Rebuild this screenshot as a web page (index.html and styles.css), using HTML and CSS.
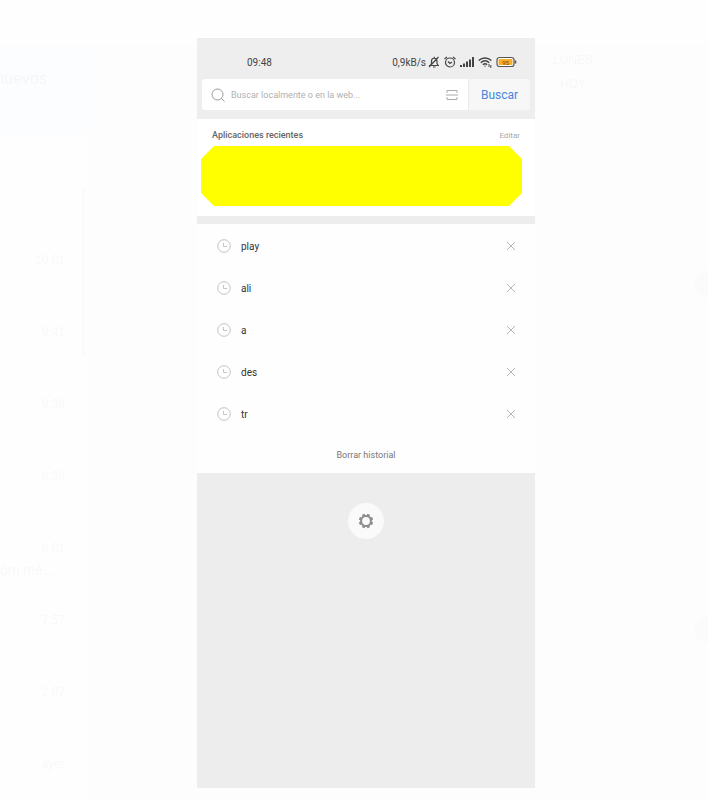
FILE: index.html
```html
<!DOCTYPE html>
<html lang="es">
<head>
    <meta charset="UTF-8">
    <meta name="viewport" content="width=device-width, initial-scale=1.0">
    <title>Buscar</title>
    <link rel="stylesheet" href="styles.css">
</head>
<body>

    <!-- Chat atenuado detrás del visor -->
    <div class="backdrop" aria-hidden="true">
        <div class="sidebar">
            <div class="notice">nuevos</div>
            <div class="filter"></div>
            <div class="chat"><span>10:01</span></div>
            <div class="chat"><span>9:41</span></div>
            <div class="chat"><span>9:38</span></div>
            <div class="chat"><span>8:30</span></div>
            <div class="chat"><span>8:01</span><p>om mé…</p></div>
            <div class="chat"><span>7:57</span></div>
            <div class="chat"><span>2:07</span></div>
            <div class="chat"><span>ayer</span></div>
            <div class="scrollbar"></div>
        </div>
        <div class="conversation">
            <div class="days">
                <span>LUNES</span>
                <span>HOY</span>
            </div>
            <div class="forward first"></div>
            <div class="forward second"></div>
        </div>
    </div>

    <main class="viewer">
        <div class="phone">
            <header class="top">
                <div class="status">
                    <span>09:48</span>
                    <div class="status-icons">
                        <span>0,9kB/s</span>
                        <svg class="bell" width="12" height="12" viewBox="0 0 24 24" fill="none" stroke="#444" stroke-width="2.4">
                            <path d="M2 19h20M5 18l2-3V10c0-3.500 2.500-5.500 5.500-5.500S18 6.500 18 10v5l2 3M12.500 4V1.500M10 22h5M2 22L21 2"/>
                        </svg>
                        <svg class="alarm" width="12" height="12" viewBox="0 0 24 24" fill="none" stroke="#444" stroke-width="2.400">
                            <circle cx="12" cy="13" r="9"/>
                            <path d="M1 6l5-4M23 6l-5-4M8 11l4 4 4-3"/>
                        </svg>
                        <svg class="signal" width="14" height="12" viewBox="0 0 14 12" fill="#444">
                            <path d="M0 9h2v2H0zM3 7.500h2V11H3zM6 5.500h2V11H6zM9 3.500h2V11H9zM12 1h2v10h-2z"/>
                        </svg>
                        <svg class="wifi" width="14" height="12" viewBox="0 0 14 12" fill="none" stroke="#444" stroke-width="1.500">
                            <path d="M.7 4.500C4.300 1 9.700 1 13.300 4.500M2.800 6.700c2.500-2.300 5.900-2.300 8.400 0M4.900 8.700c1.300-1.100 2.900-1.100 4.200 0"/>
                            <path d="M6 9.800h2L7 11z" fill="#444" stroke="none"/>
                            <path d="M11 8v3M12.800 9v3" stroke-width="1"/>
                        </svg>
                        <svg class="battery" width="21" height="12" viewBox="0 0 21 12">
                            <rect x="1" y="1.500" width="17" height="9" rx="2.500" fill="#fff" stroke="#555" stroke-width="1.200"/>
                            <rect x="2.500" y="3" width="14" height="6" rx="1" fill="#f9ae2b"/>
                            <path d="M19.500 4.500v3" stroke="#555" stroke-width="1.500"/>
                            <text x="9.500" y="8.500" text-anchor="middle">95</text>
                        </svg>
                    </div>
                </div>
                <form class="search">
                    <svg width="14" height="14" viewBox="0 0 14 14" fill="none" stroke="#999">
                        <circle cx="6.500" cy="6.500" r="5.500"/>
                        <path d="M10.500 10.500l3 3"/>
                    </svg>
                    <input type="text" aria-label="Buscar" placeholder="Buscar localmente o en la web...">
                    <button type="button" class="scan" aria-label="Escanear">
                        <svg width="12" height="12" viewBox="0 0 12 12" fill="none" stroke="#aaa">
                            <path d="M1 4V1.500h10V4M0 6h12M1 8v2.500h10V8"/>
                        </svg>
                    </button>
                    <button type="submit" class="submit">Buscar</button>
                </form>
            </header>

            <section class="recent">
                <div class="recent-head">
                    <h2>Aplicaciones recientes</h2>
                    <button type="button">Editar</button>
                </div>
                <div class="apps"></div>
            </section>

            <section class="history">
                <ul id="historyList">
                    <li><svg class="clock" viewBox="0 0 14 14"><circle cx="7" cy="7" r="6.300"/><path d="M6.500 4v3.500H10"/></svg><span>play</span><button type="button" aria-label="Quitar play"><svg viewBox="0 0 10 10"><path d="M1 1l8 8M9 1L1 9"/></svg></button></li>
                    <li><svg class="clock" viewBox="0 0 14 14"><circle cx="7" cy="7" r="6.300"/><path d="M6.500 4v3.500H10"/></svg><span>ali</span><button type="button" aria-label="Quitar ali"><svg viewBox="0 0 10 10"><path d="M1 1l8 8M9 1L1 9"/></svg></button></li>
                    <li><svg class="clock" viewBox="0 0 14 14"><circle cx="7" cy="7" r="6.300"/><path d="M6.500 4v3.500H10"/></svg><span>a</span><button type="button" aria-label="Quitar a"><svg viewBox="0 0 10 10"><path d="M1 1l8 8M9 1L1 9"/></svg></button></li>
                    <li><svg class="clock" viewBox="0 0 14 14"><circle cx="7" cy="7" r="6.300"/><path d="M6.500 4v3.500H10"/></svg><span>des</span><button type="button" aria-label="Quitar des"><svg viewBox="0 0 10 10"><path d="M1 1l8 8M9 1L1 9"/></svg></button></li>
                    <li><svg class="clock" viewBox="0 0 14 14"><circle cx="7" cy="7" r="6.300"/><path d="M6.500 4v3.500H10"/></svg><span>tr</span><button type="button" aria-label="Quitar tr"><svg viewBox="0 0 10 10"><path d="M1 1l8 8M9 1L1 9"/></svg></button></li>
                </ul>
                <button type="button" class="clear">Borrar historial</button>
            </section>

            <button type="button" class="settings" aria-label="Ajustes">
                <svg width="16" height="16" viewBox="0 0 16 16">
                    <circle cx="8" cy="8" r="4.900" fill="none" stroke="#8e8e8e" stroke-width="2"/>
                    <g fill="#8e8e8e" transform="rotate(22.500 8 8)">
                        <path id="tooth" d="M6.300 3L6.700.8h2.600l.4 2.200z"/>
                        <use href="#tooth" transform="rotate(45 8 8)"/>
                        <use href="#tooth" transform="rotate(90 8 8)"/>
                        <use href="#tooth" transform="rotate(135 8 8)"/>
                        <use href="#tooth" transform="rotate(180 8 8)"/>
                        <use href="#tooth" transform="rotate(225 8 8)"/>
                        <use href="#tooth" transform="rotate(270 8 8)"/>
                        <use href="#tooth" transform="rotate(315 8 8)"/>
                    </g>
                </svg>
            </button>
        </div>
    </main>

</body>
</html>
```

FILE: styles.css
```css
* {
    box-sizing: border-box;
}

body {
    margin: 0;
    background: #fefefe;
    font-family: Roboto, "Liberation Sans", sans-serif;
    color: #444;
}

button, input {
    font-family: inherit;
    border: none;
    background: none;
    padding: 0;
}

button {
    cursor: pointer;
}

svg {
    display: block;
    flex: none;
}

/* Fondo atenuado */
.backdrop {
    position: fixed;
    inset: 0;
    display: flex;
    overflow: hidden;
    font-family: "Liberation Sans", sans-serif;
    font-size: 12px;
    color: #f8f8f8;
}

.sidebar {
    position: relative;
    width: 87px;
    padding-top: 45px;
    flex: none;
}

.notice {
    display: flex;
    justify-content: flex-end;
    height: 90px;
    padding: 24px 40px 0 0;
    background: #fbfdfe;
    color: #f4f7f8;
    font-size: 16px;
    line-height: 20px;
}

.filter {
    height: 101px;
}

.chat {
    height: 72px;
    padding: 16px 22px 0 0;
    line-height: 16px;
    text-align: right;
}

.chat p {
    margin: 6px 10px 0 0;
    font-size: 14px;
    white-space: nowrap;
}

.scrollbar {
    position: absolute;
    top: 188px;
    right: 2px;
    width: 3px;
    height: 168px;
    background: #fbfbfb;
}

.conversation {
    position: relative;
    flex: 1;
    margin-top: 45px;
    background: #fdfdfd;
}

.days {
    position: absolute;
    top: 3px;
    right: 105px;
    width: 60px;
    text-align: center;
    line-height: 24px;
    color: #f7f7f7;
}

.days span {
    display: block;
}

.forward {
    position: absolute;
    right: -12px;
    width: 26px;
    height: 26px;
    border-radius: 50%;
    background: #fbfbfb;
}

.forward.first {
    top: 226px;
}

.forward.second {
    top: 572px;
}

/* Captura del teléfono */
.viewer {
    position: relative;
    display: flex;
    justify-content: center;
    min-height: 100vh;
    padding: 38px 0 13px 24px;
}

.phone {
    display: flex;
    flex-direction: column;
    width: 100%;
    max-width: 338px;
    background: #ededed;
}

.top {
    padding: 16px 5px 9px;
    background: #eee;
}

.status {
    display: flex;
    align-items: center;
    justify-content: space-between;
    height: 16px;
    padding: 0 13px 0 45px;
    margin-bottom: 9px;
    font-size: 10px;
}

.status-icons {
    display: flex;
    align-items: center;
    gap: 4px;
}

.status-icons .bell {
    margin-left: -2px;
}

.battery text {
    font-size: 6px;
    fill: #6b4a12;
}

.search {
    display: flex;
    align-items: center;
    height: 31px;
    padding-left: 9px;
    background: #fff;
    border-radius: 3px;
    overflow: hidden;
}

.search input {
    flex: 1;
    min-width: 0;
    margin-left: 6px;
    font-size: 9px;
    outline: none;
}

.search input::placeholder {
    color: #b0b0b0;
}

.scan {
    margin-right: 10px;
}

.submit {
    align-self: stretch;
    width: 62px;
    background: #f7f7f7;
    border-left: 1px solid #eaeaea;
    color: #4a86dc;
    font-size: 12px;
}

.recent {
    padding: 8px 13px 10px 4px;
    background: #fff;
}

.recent-head {
    display: flex;
    align-items: center;
    justify-content: space-between;
    height: 16px;
    margin-bottom: 3px;
    padding: 0 2px 0 11px;
}

.recent-head h2 {
    margin: 0;
    font-size: 9px;
    font-weight: 500;
    color: #666;
}

.recent-head button {
    font-size: 8px;
    color: #aaa;
}

.apps {
    height: 60px;
    background: #ff0;
    clip-path: polygon(13px 0, calc(100% - 13px) 0, 100% 13px, 100% calc(100% - 13px), calc(100% - 13px) 100%, 13px 100%, 0 calc(100% - 13px), 0 13px);
}

.history {
    margin-top: 8px;
    background: #fefefe;
}

.history ul {
    list-style: none;
    margin: 0;
    padding: 1px 0 2px;
}

.history li {
    display: flex;
    align-items: center;
    height: 42px;
    padding: 0 19px 0 20px;
    font-size: 10px;
    color: #333;
}

.history li span {
    flex: 1;
    margin-left: 10px;
}

.history li svg {
    width: 10px;
    height: 10px;
    fill: none;
    stroke: #b5b5b5;
}

.history li .clock {
    width: 14px;
    height: 14px;
    stroke: #c4c4c4;
}

.clear {
    display: block;
    width: 100%;
    height: 36px;
    font-size: 9px;
    color: #777;
}

.settings {
    display: flex;
    align-items: center;
    justify-content: center;
    align-self: center;
    width: 36px;
    height: 36px;
    margin-top: 30px;
    border-radius: 50%;
    background: #fafafa;
}
```
